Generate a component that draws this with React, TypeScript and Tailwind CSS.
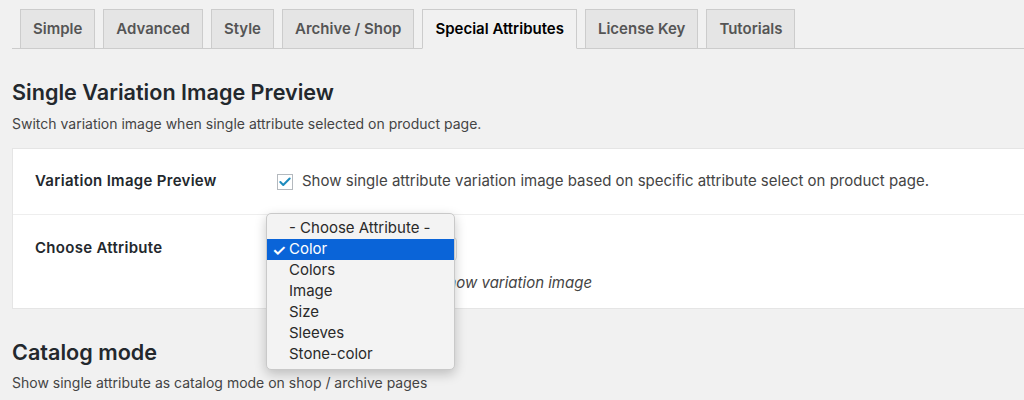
import { Check } from "lucide-react"

const tabs = ["Simple", "Advanced", "Style", "Archive / Shop", "Special Attributes", "License Key", "Tutorials"]
const options = ["- Choose Attribute -", "Color", "Colors", "Image", "Size", "Sleeves", "Stone-color"]

export default function App() {
  return (
    <div className="h-[400px] overflow-hidden bg-[#f1f1f1] text-[#444] font-['Inter','Liberation_Sans',sans-serif]">
      <nav className="ml-[12px] flex gap-2 border-b border-[#ccc] pl-[8px] pt-[9px]">
        {tabs.map((tab) => {
          const active = tab === "Special Attributes"
          return (
            <div
              key={tab}
              className={
                active
                  ? "-mb-px border border-[#ccc] border-b-[#f1f1f1] bg-[#f1f1f1] px-3 py-[7px] text-[15px] leading-6 font-semibold text-black"
                  : "-mb-px border border-[#ccc] bg-[#e5e5e5] px-3 py-[7px] text-[15px] leading-6 font-semibold text-[#555]"
              }
            >
              {tab}
            </div>
          )
        })}
      </nav>

      <div className="pl-[12px]">
        <h2 className="mt-[29px] text-[21.6px] leading-7 font-semibold text-[#23282d]">Single Variation Image Preview</h2>
        <p className="mt-[9px] text-[14px] leading-[18px]">Switch variation image when single attribute selected on product page.</p>

        <div className="mt-[15px] border border-r-0 border-[#e5e5e5] bg-white">
          <div className="flex h-[66px] items-center border-b border-[#eee]">
            <div className="w-[264px] pl-[22px] text-[15px] font-semibold tracking-[0.3px] text-[#23282d]">Variation Image Preview</div>
            <label className="flex items-center gap-[9px] text-[15px] text-[#444]">
              <span className="flex h-[16px] w-[16px] items-center justify-center border border-[#b4b9be] bg-white">
                <Check size={16} strokeWidth={3.5} className="text-[#1e8cbe]" />
              </span>
              Show single attribute variation image based on specific attribute select on product page.
            </label>
          </div>

          <div className="flex h-[93px]">
            <div className="w-[264px] pt-[23px] pl-[22px] text-[15px] leading-5 font-semibold tracking-[0.3px] text-[#23282d]">Choose Attribute</div>
            <div className="relative pt-[22px]">
              <div className="h-[24px] w-[180px] rounded border border-[#ddd] bg-white" />
              <p className="mt-[12px] ml-[22px] text-[15px] leading-5 italic text-[#444]">Choose attribute to show variation image</p>

              <div className="absolute top-[-2px] left-[-11px] w-[189px] rounded-[5px] border border-[#c9c9c9] bg-[#f3f3f3] py-[4px] text-[15px] text-[#2a2a2a] shadow-[0_4px_12px_rgba(0,0,0,0.22)]">
                {options.map((opt) => {
                  const selected = opt === "Color"
                  return (
                    <div
                      key={opt}
                      className={
                        selected
                          ? "relative flex h-[21px] items-center bg-[#0a64d8] pl-[22px] text-white"
                          : "relative flex h-[21px] items-center pl-[22px]"
                      }
                    >
                      {selected && <span className="absolute left-[5px] text-[16px] font-semibold">✓</span>}
                      {opt}
                    </div>
                  )
                })}
              </div>
            </div>
          </div>
        </div>

        <h2 className="mt-[29px] text-[21.6px] leading-7 font-semibold text-[#23282d]">Catalog mode</h2>
        <p className="mt-[8px] text-[14px] leading-[18px]">Show single attribute as catalog mode on shop / archive pages</p>
      </div>
    </div>
  )
}
